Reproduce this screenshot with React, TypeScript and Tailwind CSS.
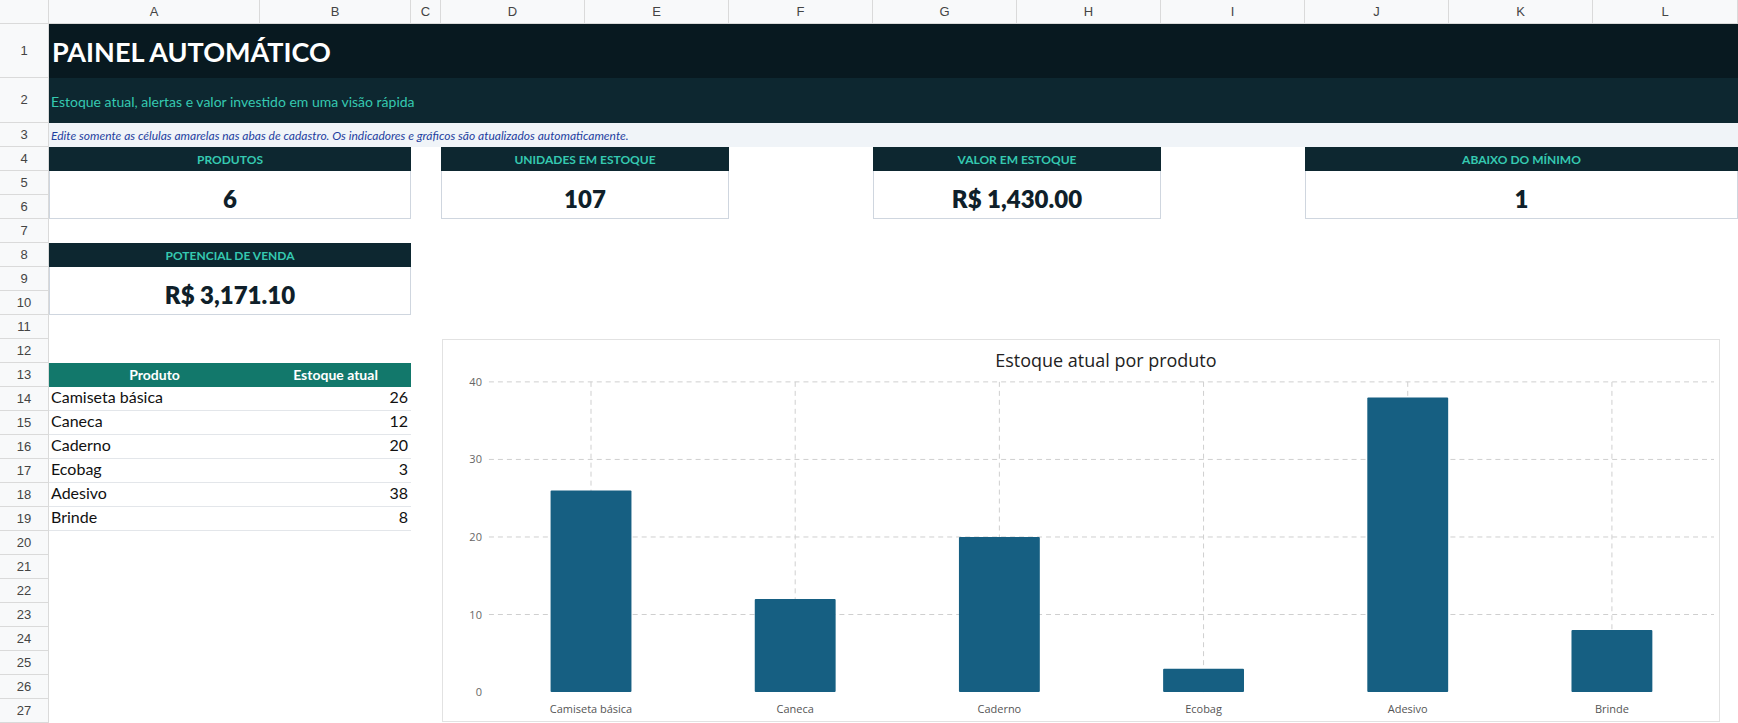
import React from "react";

const cols = ["A","B","C","D","E","F","G","H","I","J","K","L"];
const products: [string, number][] = [["Camiseta básica",26],["Caneca",12],["Caderno",20],["Ecobag",3],["Adesivo",38],["Brinde",8]];
const font = { fontFamily: "Lato, 'Open Sans', sans-serif" };

function Chart() {
  const L = 46, R = 1273, Y40 = 42, Y0 = 353;
  const step = (R - L) / 6;
  const y = (v: number) => Y0 - (v / 40) * (Y0 - Y40);
  return (
    <svg width="100%" height="100%" viewBox="0 0 1278 382" preserveAspectRatio="none" style={{ fontFamily: "'Open Sans', sans-serif" }}>
      <text x={664} y={27} textAnchor="middle" fontSize={18} fill="#222">Estoque atual por produto</text>
      {[0,10,20,30,40].map(v => (
        <g key={v}>
          {v > 0 && <line x1={L} x2={R} y1={y(v)} y2={y(v)} stroke="#cfcfcf" strokeDasharray="5 4" />}
          <text x={39} y={y(v) + 4} textAnchor="end" fontSize={11} fill="#666">{v}</text>
        </g>
      ))}
      {products.map(([n], i) => {
        const cx = L + step * (i + 0.5);
        return <line key={n} x1={cx} x2={cx} y1={Y40} y2={Y0} stroke="#cfcfcf" strokeDasharray="5 4" />;
      })}
      {products.map(([n, v], i) => {
        const cx = L + step * (i + 0.5);
        return (
          <g key={n}>
            <rect x={cx - 40.5} y={y(v)} width={81} height={Y0 - y(v)} fill="#165f82" rx={1} />
            <text x={cx} y={374} textAnchor="middle" fontSize={11} fill="#555">{n}</text>
          </g>
        );
      })}
    </svg>
  );
}

function Card({ title, value, cls, vcls }: { title: string; value: string; cls: string; vcls: string }) {
  return (
    <>
      <div className={`${cls} bg-[#0d2730] text-[#35c9b0] text-[12px] font-bold flex items-end justify-center pb-[2px]`}>{title}</div>
      <div className={`${vcls} bg-white border-x border-b border-[#cfd6df] text-[#0f1f2a] text-[24px] font-extrabold flex items-end justify-center pb-[1px]`}>{value}</div>
    </>
  );
}

export default function App() {
  return (
    <div className="w-[1738px] h-[723px] overflow-hidden bg-white grid grid-cols-[49px_211px_151px_30px_repeat(8,144px)_1fr] grid-rows-[24px_54px_45px_24px_repeat(24,24px)]" style={font}>
      <div className="col-start-1 row-start-1 bg-[#f8f9fa] border-r border-b border-[#dadada]" />
      {cols.map((c, i) => (
        <div key={c} className="row-start-1 bg-[#f8f9fa] border-r border-b border-[#dadada] flex items-center justify-center text-[13px] text-[#444]" style={{ gridColumnStart: i + 2, fontFamily: "Arial, 'Liberation Sans', sans-serif" }}>{c}</div>
      ))}
      {Array.from({ length: 27 }, (_, i) => (
        <div key={i} className="col-start-1 bg-[#f8f9fa] border-r border-b border-[#dadada] flex items-center justify-center text-[13px] text-[#444]" style={{ gridRowStart: i + 2, fontFamily: "Arial, 'Liberation Sans', sans-serif" }}>{i + 1}</div>
      ))}

      <div className="col-start-2 col-end-14 row-start-2 bg-[#081920] text-white text-[27px] font-bold flex items-center pl-[3px] pt-[2px]">PAINEL AUTOMÁTICO</div>
      <div className="col-start-2 col-end-14 row-start-3 bg-[#0d2730] text-[#35c9b0] text-[14px] flex items-center pl-[2px] pt-[1px]">Estoque atual, alertas e valor investido em uma visão rápida</div>
      <div className="col-start-2 col-end-14 row-start-4 bg-[#f0f4f8] text-[#1f3fa0] text-[12px] italic flex items-center pl-[2px] pt-[1px]">Edite somente as células amarelas nas abas de cadastro. Os indicadores e gráficos são atualizados automaticamente.</div>

      <Card title="PRODUTOS" value="6" cls="col-start-2 col-end-4 row-start-5" vcls="col-start-2 col-end-4 row-start-6 row-end-8" />
      <Card title="UNIDADES EM ESTOQUE" value="107" cls="col-start-5 col-end-7 row-start-5" vcls="col-start-5 col-end-7 row-start-6 row-end-8" />
      <Card title="VALOR EM ESTOQUE" value="R$ 1,430.00" cls="col-start-8 col-end-10 row-start-5" vcls="col-start-8 col-end-10 row-start-6 row-end-8" />
      <Card title="ABAIXO DO MÍNIMO" value="1" cls="col-start-11 col-end-14 row-start-5" vcls="col-start-11 col-end-14 row-start-6 row-end-8" />
      <Card title="POTENCIAL DE VENDA" value="R$ 3,171.10" cls="col-start-2 col-end-4 row-start-9" vcls="col-start-2 col-end-4 row-start-10 row-end-12" />

      <div className="col-start-2 row-start-14 bg-[#12786b] text-white text-[14px] font-bold flex items-end justify-center pb-[2px]">Produto</div>
      <div className="col-start-3 row-start-14 bg-[#12786b] text-white text-[14px] font-bold flex items-end justify-center pb-[2px]">Estoque atual</div>
      {products.map(([n, v], i) => (
        <React.Fragment key={n}>
          <div className="col-start-2 border-b border-[#e3e6ea] text-[16px] text-[#111] flex items-end pl-[2px] pb-[1px]" style={{ gridRowStart: 15 + i }}>{n}</div>
          <div className="col-start-3 border-b border-[#e3e6ea] text-[16px] text-[#111] flex items-end justify-end pr-[3px] pb-[1px]" style={{ gridRowStart: 15 + i }}>{v}</div>
        </React.Fragment>
      ))}

      <div className="col-start-5 col-end-14 row-start-13 row-end-29 mr-[18px] ml-[1px] mb-[1px] border border-[#e2e2e2] bg-white">
        <Chart />
      </div>
    </div>
  );
}
